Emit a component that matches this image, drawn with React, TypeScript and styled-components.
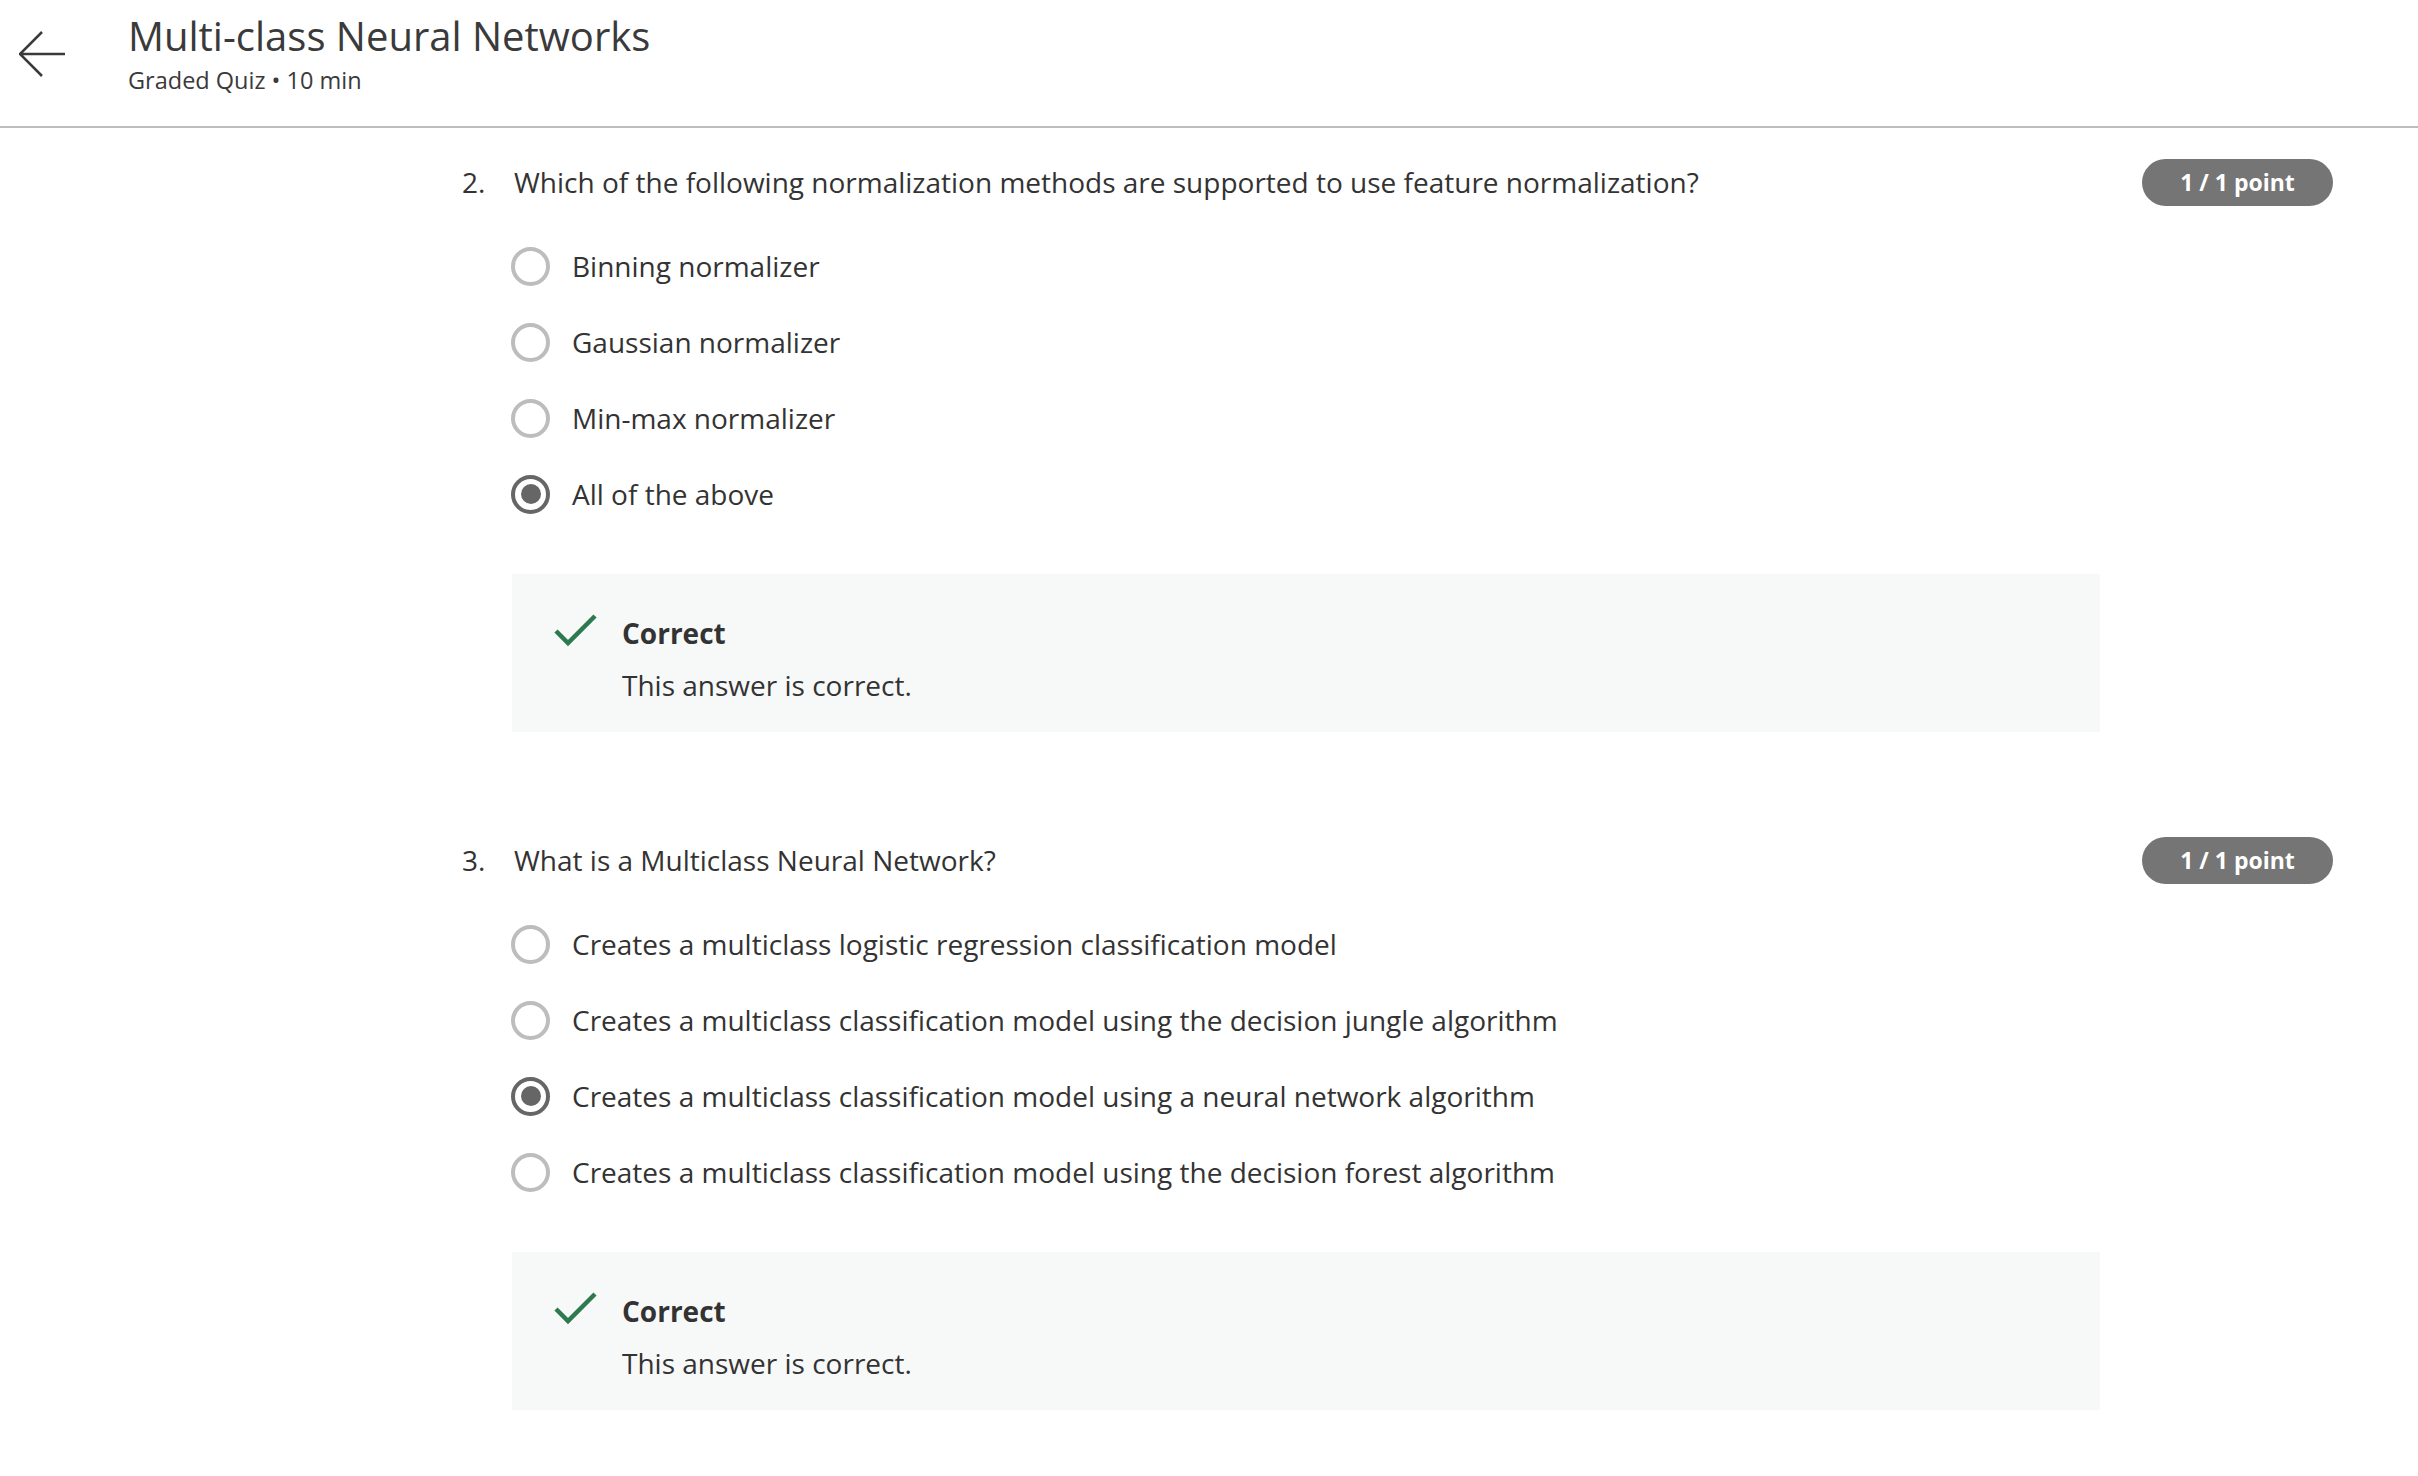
import React from "react";
import styled, { createGlobalStyle } from "styled-components";

const GlobalStyle = createGlobalStyle`
  html, body {
    margin: 0;
    padding: 0;
    background: #ffffff;
  }
  body {
    font-family: "Open Sans", "Noto Sans", "Liberation Sans", sans-serif;
    color: #333333;
  }
`;

const Header = styled.header`
  display: flex;
  align-items: flex-start;
  height: 128px;
  padding: 12px 0 0 19px;
  box-sizing: border-box;
  border-bottom: 2px solid #bdbdbd;
`;

const BackButton = styled.button`
  display: flex;
  border: none;
  background: none;
  padding: 0;
  margin-top: 19px;
  cursor: pointer;
`;

const TitleBlock = styled.div`
  display: flex;
  flex-direction: column;
  margin-left: 63px;
`;

const Title = styled.h1`
  margin: 0;
  font-size: 40px;
  line-height: 48px;
  font-weight: 400;
  color: #3a3a3a;
`;

const SubTitle = styled.div`
  margin-top: 5px;
  font-size: 23.5px;
  line-height: 30px;
  color: #3a3a3a;
`;

const Main = styled.main`
  padding: 33px 85px 0 462px;
`;

const QuestionBlock = styled.section`
  display: flex;
  flex-direction: column;
  margin-bottom: 107px;
`;

const QuestionRow = styled.div`
  display: flex;
  align-items: center;
  height: 42px;
  font-size: 28px;
  line-height: 42px;
`;

const QuestionNumber = styled.span`
  width: 52px;
  flex-shrink: 0;
`;

const QuestionText = styled.span`
  flex: 1;
`;

const PointBadge = styled.span`
  display: inline-flex;
  align-items: center;
  justify-content: center;
  flex-shrink: 0;
  width: 191px;
  height: 47px;
  border-radius: 24px;
  background: #757575;
  color: #ffffff;
  font-size: 23px;
  font-weight: 700;
`;

const OptionList = styled.div`
  display: flex;
  flex-direction: column;
  gap: 34px;
  margin: 42px 0 0 49px;
`;

const OptionRow = styled.label`
  display: flex;
  align-items: center;
  gap: 22px;
  font-size: 28px;
  line-height: 42px;
`;

const Radio = styled.span<{ checked: boolean }>`
  display: flex;
  align-items: center;
  justify-content: center;
  width: 39px;
  height: 39px;
  box-sizing: border-box;
  border-radius: 50%;
  border: 4px solid ${({ checked }) => (checked ? "#666666" : "#bdbdbd")};
  flex-shrink: 0;

  &::after {
    content: "";
    display: ${({ checked }) => (checked ? "block" : "none")};
    width: 20px;
    height: 20px;
    border-radius: 50%;
    background: #666666;
  }
`;

const Feedback = styled.div`
  display: flex;
  align-items: flex-start;
  gap: 24px;
  width: 1588px;
  height: 158px;
  box-sizing: border-box;
  margin: 59px 0 0 50px;
  padding: 38px 42px 0;
  background: #f7f9f9;
`;

const CheckIcon = styled.svg`
  flex-shrink: 0;
  margin-top: 1px;
`;

const FeedbackText = styled.div`
  display: flex;
  flex-direction: column;
  gap: 10px;
  font-size: 28px;
  line-height: 42px;
`;

const FeedbackTitle = styled.strong`
  font-weight: 700;
`;

type Question = {
  number: number;
  text: string;
  options: string[];
  selected: number;
};

const questions: Question[] = [
  {
    number: 2,
    text: "Which of the following normalization methods are supported to use feature normalization?",
    options: [
      "Binning normalizer",
      "Gaussian normalizer",
      "Min-max normalizer",
      "All of the above",
    ],
    selected: 3,
  },
  {
    number: 3,
    text: "What is a Multiclass Neural Network?",
    options: [
      "Creates a multiclass logistic regression classification model",
      "Creates a multiclass classification model using the decision jungle algorithm",
      "Creates a multiclass classification model using a neural network algorithm",
      "Creates a multiclass classification model using the decision forest algorithm",
    ],
    selected: 2,
  },
];

const QuizQuestion = ({ data }: { data: Question }) => (
  <QuestionBlock>
    <QuestionRow>
      <QuestionNumber>{data.number}.</QuestionNumber>
      <QuestionText>{data.text}</QuestionText>
      <PointBadge>1 / 1 point</PointBadge>
    </QuestionRow>
    <OptionList>
      {data.options.map((option, i) => (
        <OptionRow key={option}>
          <Radio checked={i === data.selected} />
          {option}
        </OptionRow>
      ))}
    </OptionList>
    <Feedback>
      <CheckIcon width="44" height="34" viewBox="0 0 44 34">
        <path d="M2 18 L14 30 L41 3" fill="none" stroke="#2d7a4f" strokeWidth="4.5" />
      </CheckIcon>
      <FeedbackText>
        <FeedbackTitle>Correct</FeedbackTitle>
        <span>This answer is correct.</span>
      </FeedbackText>
    </Feedback>
  </QuestionBlock>
);

const App = () => {
  return (
    <>
      <GlobalStyle />
      <Header>
        <BackButton aria-label="Back">
          <svg width="46" height="46" viewBox="0 0 46 46">
            <path d="M23 1 L1 23 L23 45 M1 23 L46 23" fill="none" stroke="#3a3a3a" strokeWidth="2.5" />
          </svg>
        </BackButton>
        <TitleBlock>
          <Title>Multi-class Neural Networks</Title>
          <SubTitle>Graded Quiz • 10 min</SubTitle>
        </TitleBlock>
      </Header>
      <Main>
        {questions.map((q) => (
          <QuizQuestion key={q.number} data={q} />
        ))}
      </Main>
    </>
  );
};

export default App;
